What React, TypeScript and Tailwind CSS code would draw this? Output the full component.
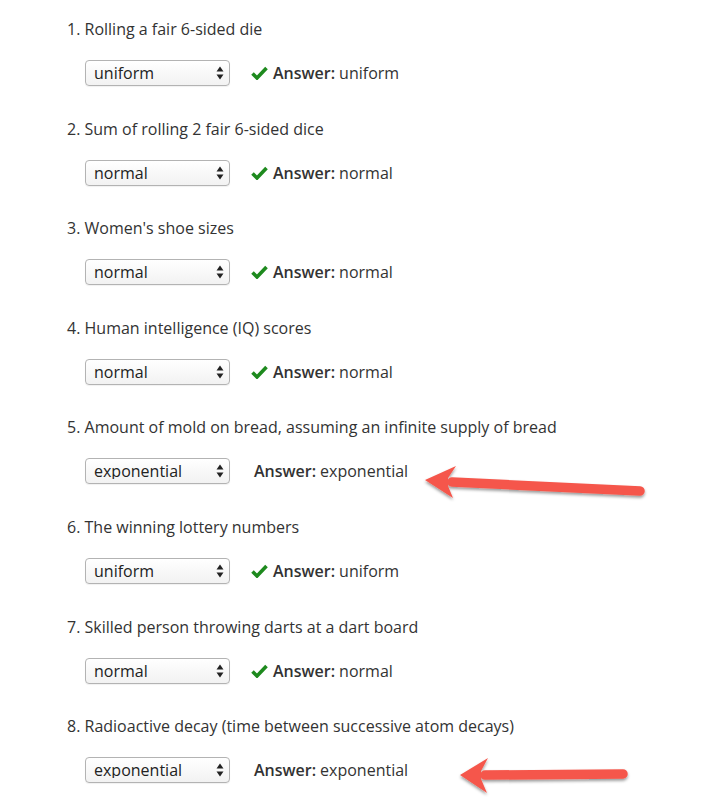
import React from 'react';

type Question = {
  title: string;
  choice: string;
  correct: boolean;
};

const questions: Question[] = [
  { title: 'Rolling a fair 6-sided die', choice: 'uniform', correct: true },
  { title: 'Sum of rolling 2 fair 6-sided dice', choice: 'normal', correct: true },
  { title: "Women's shoe sizes", choice: 'normal', correct: true },
  { title: 'Human intelligence (IQ) scores', choice: 'normal', correct: true },
  { title: 'Amount of mold on bread, assuming an infinite supply of bread', choice: 'exponential', correct: false },
  { title: 'The winning lottery numbers', choice: 'uniform', correct: true },
  { title: 'Skilled person throwing darts at a dart board', choice: 'normal', correct: true },
  { title: 'Radioactive decay (time between successive atom decays)', choice: 'exponential', correct: false },
];

const options = ['uniform', 'normal', 'exponential'];

const Check = () => (
  <svg width="17" height="14" viewBox="0 0 17 14" className="shrink-0">
    <path d="M1.5 7.5 L6 12 L15.5 2" fill="none" stroke="#1e8a1e" strokeWidth="3.6" strokeLinejoin="miter" />
  </svg>
);

// fake select, so it looks the same as the mac one in the shot
const FakeSelect = ({ value }: { value: string }) => (
  <div className="relative w-[145px] h-[26px]">
    <select
      defaultValue={value}
      className="appearance-none w-full h-full rounded-[4px] border border-[#b3b3b3] bg-gradient-to-b from-white to-[#f2f2f2] pl-[8px] pr-6 text-[16px] text-[#222] leading-none shadow-[0_1px_1px_rgba(0,0,0,0.06)] outline-none"
    >
      {options.map((o) => (
        <option key={o} value={o}>
          {o}
        </option>
      ))}
    </select>
    <svg width="8" height="14" viewBox="0 0 8 14" className="absolute right-[6px] top-[6px] pointer-events-none">
      <path d="M4 0.5 L7.5 5.5 H0.5 Z" fill="#222" />
      <path d="M4 13.5 L7.5 8.5 H0.5 Z" fill="#222" />
    </svg>
  </div>
);

const Arrow = ({ tip, tail, notch, top, bottom }: {
  tip: [number, number];
  tail: [number, number];
  notch: [number, number];
  top: [number, number];
  bottom: [number, number];
}) => (
  <g filter="url(#arrowShadow)">
    <line x1={notch[0]} y1={notch[1]} x2={tail[0]} y2={tail[1]} stroke="#f5574b" strokeWidth="9.5" strokeLinecap="round" />
    <polygon
      points={`${tip[0]},${tip[1]} ${top[0]},${top[1]} ${notch[0] - 4},${notch[1] - 4} ${notch[0] - 4},${notch[1] + 4} ${bottom[0]},${bottom[1]}`}
      fill="#f5574b"
      strokeLinejoin="round"
    />
  </g>
);

const App = () => {
  return (
    <div
      className="relative w-[716px] h-[804px] bg-white text-[#333] overflow-hidden"
      style={{ fontFamily: '"Open Sans", "Liberation Sans", sans-serif' }}
    >
      <div className="pl-[67px] pt-[17px]">
        {questions.map((q, i) => (
          <div key={i} className="h-[99.6px]">
            <div className="text-[16px] leading-[24px]">
              {i + 1}. {q.title}
            </div>
            <div className="flex items-center mt-[19px] pl-[18px]">
              <FakeSelect value={q.choice} />
              {q.correct ? (
                <div className="flex items-center ml-[21px] text-[16px]">
                  <Check />
                  <span className="ml-[5px] font-semibold">Answer:</span>
                  <span className="ml-[4px]">{q.choice}</span>
                </div>
              ) : (
                <div className="flex items-center ml-[24px] text-[16px]">
                  <span className="font-semibold">Answer:</span>
                  <span className="ml-[4px]">{q.choice}</span>
                </div>
              )}
            </div>
          </div>
        ))}
      </div>

      {/* annotation arrows drawn over the page */}
      <svg width="716" height="804" className="absolute inset-0 pointer-events-none">
        <defs>
          <filter id="arrowShadow" x="-10%" y="-50%" width="120%" height="200%">
            <feDropShadow dx="0" dy="2" stdDeviation="1.6" floodColor="#000" floodOpacity="0.4" />
          </filter>
        </defs>
        <Arrow tip={[425, 480]} top={[456, 466]} bottom={[453, 498]} notch={[452, 482]} tail={[640, 491]} />
        <Arrow tip={[460, 775]} top={[488, 758]} bottom={[487, 793]} notch={[485, 775]} tail={[623, 774]} />
      </svg>
    </div>
  );
};

export default App;
